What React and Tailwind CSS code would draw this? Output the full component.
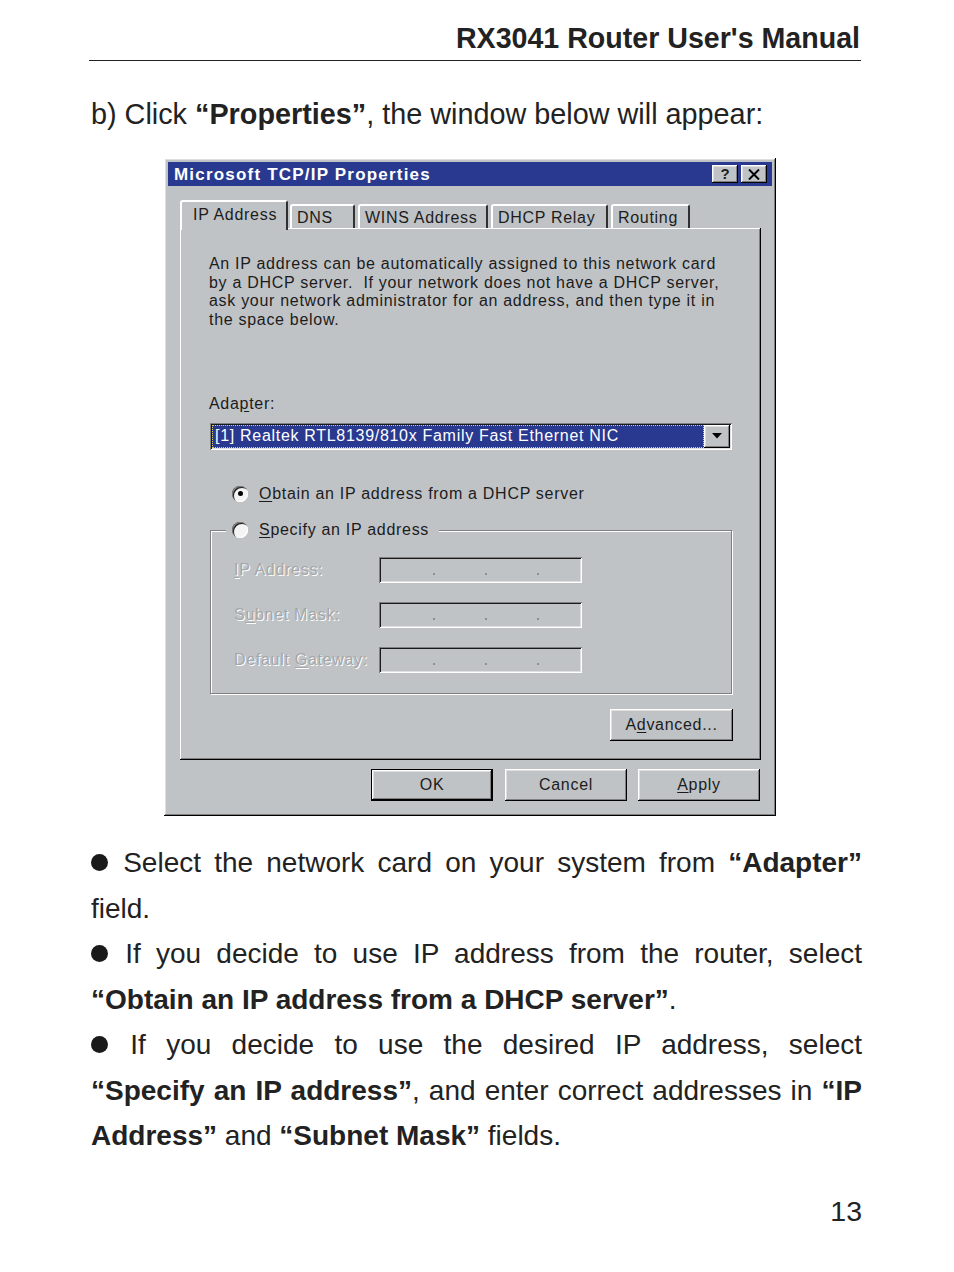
import React from "react";

const raised =
  "shadow-[inset_-1px_-1px_#000,inset_1px_1px_#fff,inset_-2px_-2px_#808080,inset_2px_2px_#dfdfdf]";
const sunken =
  "shadow-[inset_1px_1px_#808080,inset_-1px_-1px_#fff,inset_2px_2px_#1a1a1a,inset_-2px_-2px_#dfdfdf]";

function U({ children }) {
  return <span className="underline underline-offset-2">{children}</span>;
}

function Tab({ w, active, children }) {
  if (active) {
    return (
      <div
        className={`relative z-10 -mb-[2px] h-[30px] ${w} rounded-t-[3px] border-t-2 border-l-2 border-r-2 border-t-white border-l-white border-r-[#303030] bg-[#c0c3c6] pl-[11px] pt-[1px] text-[16px]`}
      >
        {children}
      </div>
    );
  }
  return (
    <div
      className={`h-[24px] ${w} rounded-t-[3px] border-t-2 border-l-2 border-r-2 border-t-white border-l-white border-r-[#303030] pl-[5px] text-[16px]`}
    >
      {children}
    </div>
  );
}

function Radio({ checked }) {
  return (
    <span className="flex h-[16px] w-[16px] items-center justify-center rounded-full bg-[#f4f4f4] shadow-[inset_1px_1px_#808080,inset_2px_2px_#222,inset_-1px_-1px_#fff]">
      {checked && <span className="h-[5px] w-[5px] rounded-full bg-black" />}
    </span>
  );
}

function IpField() {
  return (
    <div className={`flex h-[26px] w-[203px] items-center pl-[54px] pt-[8px] ${sunken} bg-[#c0c3c6]`}>
      <span className="h-[2px] w-[2px] bg-[#8d9093]" />
      <span className="ml-[50px] h-[2px] w-[2px] bg-[#8d9093]" />
      <span className="ml-[50px] h-[2px] w-[2px] bg-[#8d9093]" />
    </div>
  );
}

function FieldRow({ label, className }) {
  return (
    <div className={`flex items-center ${className}`}>
      <div className="w-[145px] whitespace-nowrap text-[16px] text-[#a3a7aa] [text-shadow:1px_1px_0_#fff]">
        {label}
      </div>
      <IpField />
    </div>
  );
}

function Dialog() {
  return (
    <div
      className={`ml-[164px] flex h-[658px] w-[612px] flex-col bg-[#c0c3c6] p-[4px] tracking-[0.7px] text-[#1c1c1c] ${raised}`}
    >
      {/* title bar */}
      <div className="flex h-[24px] items-center justify-between bg-[#29398f] pl-[6px] pr-[5px]">
        <span className="pt-[2px] text-[17px] font-bold tracking-[1.2px] text-white">
          Microsoft TCP/IP Properties
        </span>
        <div className="flex gap-[3px]">
          <div
            className={`flex h-[18px] w-[26px] items-center justify-center bg-[#c0c3c6] text-[15px] font-bold tracking-normal ${raised}`}
          >
            ?
          </div>
          <div className={`flex h-[18px] w-[26px] items-center justify-center bg-[#c0c3c6] ${raised}`}>
            <svg width="12" height="11" viewBox="0 0 12 11">
              <path d="M1 0.5 L11 10.5 M11 0.5 L1 10.5" stroke="#000" strokeWidth="2" />
            </svg>
          </div>
        </div>
      </div>

      {/* tabs */}
      <div className="ml-[12px] mt-[14px] flex h-[28px] items-end whitespace-nowrap">
        <Tab w="w-[108px]" active>
          IP Address
        </Tab>
        <div className="ml-[2px]" />
        <Tab w="w-[65px]">DNS</Tab>
        <div className="ml-[3px]" />
        <Tab w="w-[130px]">WINS Address</Tab>
        <div className="ml-[3px]" />
        <Tab w="w-[117px]">DHCP Relay</Tab>
        <div className="ml-[3px]" />
        <Tab w="w-[79px]">Routing</Tab>
      </div>

      {/* panel */}
      <div className="ml-[12px] h-[532px] w-[581px] shadow-[inset_-1px_-1px_#000,inset_1px_1px_#fff,inset_-2px_-2px_#808080]">
        <div className="whitespace-nowrap pl-[29px] pt-[27px] text-[16px] leading-[18.7px]">
          An IP address can be automatically assigned to this network card
          <br />
          by a DHCP server.&nbsp; If your network does not have a DHCP server,
          <br />
          ask your network administrator for an address, and then type it in
          <br />
          the space below.
        </div>

        <div className="mt-[65px] pl-[29px] text-[16px] leading-[18.7px]">
          Ada<U>p</U>ter:
        </div>

        <div className={`ml-[30px] mt-[9px] flex h-[27px] w-[522px] items-center bg-white p-[2px] ${sunken}`}>
          <div className="flex h-[23px] flex-1 items-center whitespace-nowrap border border-dotted border-[#e6d640] bg-[#2a3990] pl-[2px] text-[16px] text-white">
            [1] Realtek RTL8139/810x Family Fast Ethernet NIC
          </div>
          <div className={`flex h-[23px] w-[26px] items-center justify-center bg-[#c0c3c6] ${raised}`}>
            <svg width="10" height="6" viewBox="0 0 10 6">
              <path d="M0 0 H10 L5 5.5 Z" fill="#000" />
            </svg>
          </div>
        </div>

        <div className="ml-[52px] mt-[34px] flex h-[20px] items-center gap-[11px] whitespace-nowrap text-[16px]">
          <Radio checked />
          <span>
            <U>O</U>btain an IP address from a DHCP server
          </span>
        </div>

        <div className="ml-[30px] mt-[26px] h-[164px] w-[522px] border border-[#808080] shadow-[inset_1px_1px_#fff,1px_1px_#fff]">
          <div className="-mt-[11px] ml-[15px] flex h-[20px] w-fit items-center gap-[11px] whitespace-nowrap bg-[#c0c3c6] pl-[6px] pr-[10px] text-[16px]">
            <Radio />
            <span>
              <U>S</U>pecify an IP address
            </span>
          </div>
          <div className="pl-[23px]">
            <FieldRow
              className="mt-[17px]"
              label={
                <>
                  <U>I</U>P Address:
                </>
              }
            />
            <FieldRow
              className="mt-[19px]"
              label={
                <>
                  S<U>u</U>bnet Mask:
                </>
              }
            />
            <FieldRow
              className="mt-[19px]"
              label={
                <>
                  Default <U>G</U>ateway:
                </>
              }
            />
          </div>
        </div>

        <div
          className={`ml-[430px] mt-[15px] flex h-[32px] w-[123px] items-center justify-center text-[16px] ${raised}`}
        >
          A<U>d</U>vanced...
        </div>
      </div>

      {/* buttons */}
      <div className="mt-[9px] flex justify-end pr-[12px] text-[16px]">
        <div className={`flex h-[32px] w-[122px] items-center justify-center border border-black ${raised}`}>
          OK
        </div>
        <div className={`ml-[12px] flex h-[32px] w-[122px] items-center justify-center ${raised}`}>
          Cancel
        </div>
        <div className={`ml-[11px] flex h-[32px] w-[122px] items-center justify-center ${raised}`}>
          <U>A</U>pply
        </div>
      </div>
    </div>
  );
}

function Bullet() {
  return <span className="mr-[2px] inline-block h-[17px] w-[17px] rounded-full bg-[#1a1a1a] align-[1px]" />;
}

const just = "whitespace-nowrap text-justify [text-align-last:justify]";

export default function App() {
  return (
    <div className="h-[1272px] w-[954px] bg-white font-['Liberation_Sans',Arial,sans-serif] text-[#222]">
      <div className="pr-[94px] pt-[21px] text-right text-[28.6px] font-bold leading-[34px]">
        RX3041 Router User's Manual
      </div>
      <div className="ml-[89px] mt-[5px] h-px w-[772px] bg-[#222]" />

      <div className="mt-[36px] pl-[91px] text-[28.8px] leading-[34px]">
        b) Click <b>“Properties”</b>, the window below will appear:
      </div>

      <div className="mt-[27px]">
        <Dialog />
      </div>

      <div className="ml-[91px] mt-[24px] w-[771px] text-[28px] leading-[45.5px]">
        <div className={just}>
          <Bullet /> Select the network card on your system from <b>“Adapter”</b>
        </div>
        <div>field.</div>
        <div className={just}>
          <Bullet /> If you decide to use IP address from the router, select
        </div>
        <div>
          <b>“Obtain an IP address from a DHCP server”</b>.
        </div>
        <div className={just}>
          <Bullet /> If you decide to use the desired IP address, select
        </div>
        <div className={just}>
          <b>“Specify an IP address”</b>, and enter correct addresses in <b>“IP</b>
        </div>
        <div>
          <b>Address”</b> and <b>“Subnet Mask”</b> fields.
        </div>
      </div>

      <div className="mt-[35px] pr-[92px] text-right text-[28.5px] leading-[34px]">13</div>
    </div>
  );
}
